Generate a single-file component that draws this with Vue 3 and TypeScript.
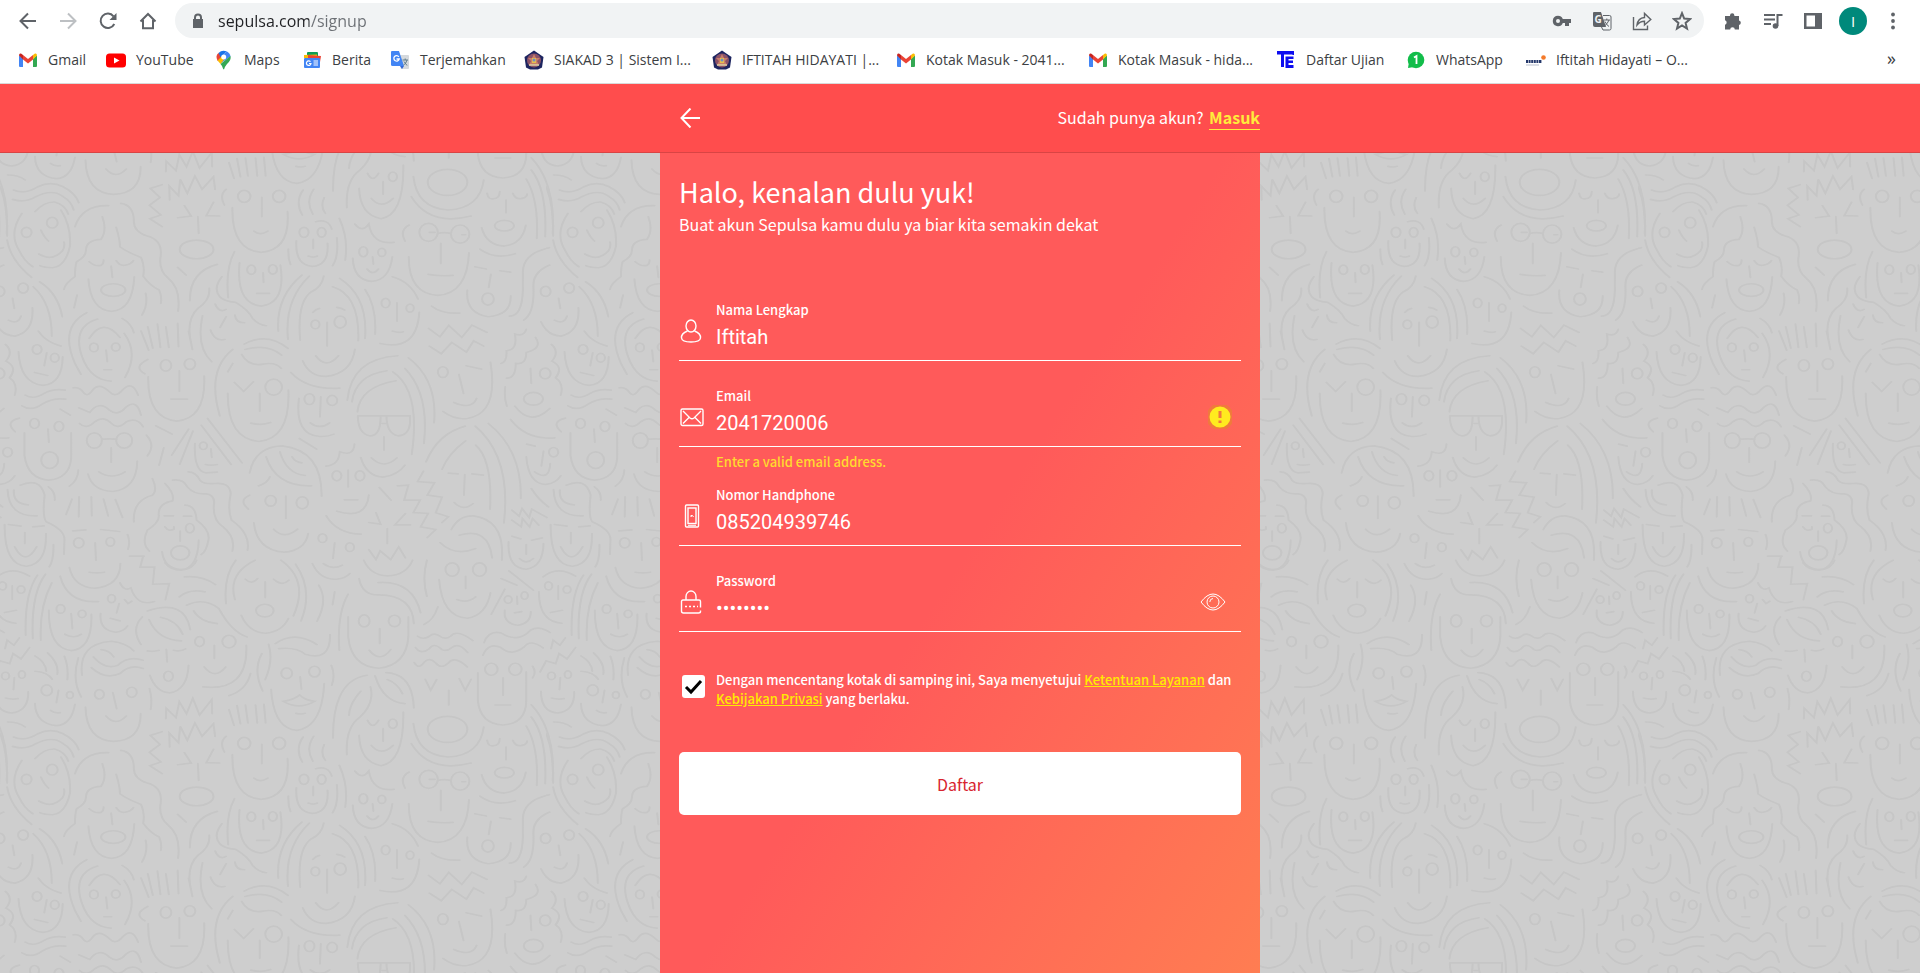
<script setup lang="ts">
import { ref } from 'vue'

interface Bookmark { icon: string; label: string; size: string }
interface Field { id: string; label: string; type: string; icon: string; error?: string }

const address = ref('sepulsa.com/signup')
const agreed = ref(true)
const showPassword = ref(false)
const values = ref<Record<string, string>>({
  name: 'Iftitah',
  email: '2041720006',
  phone: '085204939746',
  password: 'rahasia1',
})

const bookmarks: Bookmark[] = [
  { icon: 'gmail', label: 'Gmail', size: 'b88' },
  { icon: 'youtube', label: 'YouTube', size: 'b108' },
  { icon: 'maps', label: 'Maps', size: 'b88' },
  { icon: 'news', label: 'Berita', size: 'b88' },
  { icon: 'translate', label: 'Terjemahkan', size: 'b134' },
  { icon: 'crest', label: 'SIAKAD 3 | Sistem I...', size: 'b188' },
  { icon: 'crest', label: 'IFTITAH HIDAYATI |...', size: 'b184' },
  { icon: 'gmail', label: 'Kotak Masuk - 2041...', size: 'b192' },
  { icon: 'gmail', label: 'Kotak Masuk - hida...', size: 'b188' },
  { icon: 'te', label: 'Daftar Ujian', size: 'b130' },
  { icon: 'whatsapp', label: 'WhatsApp', size: 'b120' },
  { icon: 'alterra', label: 'Iftitah Hidayati – O...', size: 'b188' },
]

const fields: Field[] = [
  { id: 'name', label: 'Nama Lengkap', type: 'text', icon: 'person' },
  { id: 'email', label: 'Email', type: 'text', icon: 'mail', error: 'Enter a valid email address.' },
  { id: 'phone', label: 'Nomor Handphone', type: 'tel', icon: 'phone' },
  { id: 'password', label: 'Password', type: 'password', icon: 'lock' },
]

function inputType(f: Field): string {
  return f.type === 'password' && showPassword.value ? 'text' : f.type
}

// Doodle tile, upper part: faces and hair strokes.
const upper = [
  'M97 240Q105 262 115 273M92 312Q125 335 148 303Q155 290 152 276M52 190Q20 250 45 300Q58 335 78 350M145 180Q170 230 166 290Q155 350 125 353Q105 352 95 347M32 120Q60 135 90 110Q120 92 150 110Q180 130 187 158M30 148Q60 160 85 140Q125 115 150 140Q170 155 175 180M83 185Q105 155 130 156Q155 165 162 192M17 270Q25 330 75 382M0 110Q18 160 17 258',
  'M178 230Q195 165 258 167M287 160Q318 165 318 215Q318 245 350 258Q385 270 382 315Q375 360 400 385Q430 415 423 483M243 200Q255 240 240 268Q205 270 204 300Q205 320 182 335Q178 350 178 380Q155 400 152 418M276 232Q285 270 285 290Q300 305 335 322Q345 350 340 378Q355 405 378 420Q385 440 382 460M212 335Q225 350 240 346Q247 340 246 330M276 332Q285 350 300 345Q312 342 317 332M264 348L267 382M210 387Q215 480 265 484Q315 480 319 380M183 435L176 473M346 430Q352 465 337 495',
  'M385 104L357 115L380 142L355 166L382 195L356 206L385 230M422 203L454 198L438 167M507 157L490 197L522 198M470 200L472 250M403 150L402 108L424 137L428 88L445 130L463 78L480 118L507 80L511 118M422 352L442 375',
  'M537 118Q520 135 533 165M622 142L622 200M603 243Q618 258 636 243M552 173Q550 300 620 307Q690 300 683 185',
  'M744 268V295M732 318Q745 324 754 318M704 272Q700 345 742 349Q782 345 778 280M750 215Q780 205 788 237M800 263Q805 320 790 347M806 205Q828 265 820 330M685 297Q684 325 690 343M720 120Q700 155 718 195M745 118Q725 155 743 192M770 143Q760 170 773 190',
  'M625 368L626 397M610 430H640M569 338Q560 460 620 468Q680 460 666 345M557 305Q535 355 542 443',
  'M516 343Q450 365 451 452M527 380Q505 415 522 440Q530 453 560 457Q590 480 600 505Q615 525 633 527M497 415Q500 450 470 475Q440 510 455 585M481 497Q465 590 503 635M511 462Q520 490 537 478M537 500L523 532M558 495Q560 518 581 518M500 540Q510 575 534 568',
  'M873 70Q885 100 899 70M910 95V133M882 145Q905 180 934 145M853 115Q855 195 905 206Q960 195 958 45',
  'M1157 130Q1160 150 1172 146Q1187 145 1187 125M1218 130Q1225 150 1240 145Q1252 142 1252 132M1202 150V188M1144 233Q1155 285 1198 288Q1240 282 1249 226M1140 297Q1175 330 1224 311M1250 87Q1280 150 1275 265M1262 60Q1300 120 1295 260',
  'M1040 250Q1055 245 1070 250M1020 247H1033M1097 254H1106M1047 280V340M1017 373Q1045 379 1076 376M971 320Q970 430 1040 436Q1110 430 1114 308M972 225Q948 240 962 273',
  'M885 320L887 342M872 357Q885 378 899 357M838 325Q840 390 883 394Q925 390 932 320M843 222Q860 250 876 222Q885 285 936 277',
  'M1128 350L1155 357M1187 362L1213 366M1166 373L1161 412M1110 420Q1105 490 1160 500Q1215 495 1213 437M1305 293Q1240 310 1242 370V420Q1240 500 1210 498M1306 345Q1265 365 1267 410Q1270 490 1244 510M1025 468Q1050 492 1092 489',
  'M943 458V513M932 543Q947 550 958 545M903 580Q990 605 996 487M932 380Q975 395 993 447',
  'M777 517V588M743 487Q750 477 759 475M800 472Q812 474 819 480M750 617Q775 660 804 617M719 632Q735 680 775 679Q835 670 843 598M717 375Q655 440 661 543M735 378Q675 450 684 567M769 378Q765 410 740 425Q705 455 713 570M807 385Q875 440 867 565M790 410Q855 435 851 572M867 418Q895 470 891 552M691 667Q730 720 807 714',
  'M1018 535L1045 560L1066 526L1097 562L1121 525L1157 547M1020 588L1048 611L1073 577L1108 606L1125 572L1149 588',
  'M1327 445L1331 475M1317 510Q1340 525 1347 498M1285 515Q1300 557 1333 558Q1378 545 1374 473M1376 410Q1420 460 1420 558M1391 395Q1435 430 1445 500M1388 543Q1405 575 1442 588',
  'M1408 608L1402 647M1379 667L1410 676M1341 605Q1345 700 1400 706Q1445 700 1446 620',
  'M1250 538Q1245 560 1223 552Q1230 600 1203 602Q1205 635 1190 640M1272 562Q1290 595 1250 607Q1250 645 1225 640Q1225 685 1203 684M1310 583Q1330 605 1311 633Q1340 650 1320 683Q1340 700 1332 735M1260 655L1262 700M1223 768Q1260 830 1306 775M1213 808Q1250 870 1318 863M1200 710Q1197 745 1204 768',
  'M252 600L255 635M247 659H265M212 565Q245 500 285 562M295 550Q330 610 297 682M232 507Q170 530 195 620Q215 690 264 693M206 488Q140 530 178 640L192 672M290 505Q312 520 318 548',
  'M335 543L353 600M351 530L363 594M374 522L381 592M394 530L401 592M422 520L424 590M448 543L457 598M426 662V723M406 747H445M352 680Q350 805 420 813Q490 805 485 678M351 628Q315 650 344 671',
  'M557 697L579 724L602 695M617 730V783M596 819Q620 827 643 817M541 730Q540 865 615 874Q690 865 685 720M553 598Q490 660 522 797M541 665L553 640M574 613Q590 650 625 642Q655 635 668 655M582 598Q635 580 669 615M580 582Q635 545 684 595',
  'M762 740L760 800M737 818Q760 840 783 818M710 745Q700 855 760 859Q780 860 793 852',
  'M850 797H974V820Q970 857 945 857Q918 850 918 797M904 797Q905 857 878 857Q850 850 850 797M908 820H918M912 860V900M882 923Q912 960 943 923M857 922Q870 978 910 981Q945 975 962 945M849 785Q855 710 941 692M836 755Q845 675 919 662M825 750Q835 625 945 617M933 665Q1000 720 978 913M962 655Q1020 730 1007 880M970 623Q1040 690 1031 818',
  'M1107 647L1144 657M1090 673L1101 730M1078 757Q1120 780 1132 745M1052 784Q1080 810 1110 805Q1185 790 1165 637',
  'M60 735Q80 750 105 730Q125 715 155 720M52 767Q75 785 100 762Q125 742 156 747M143 777L167 795M174 713Q190 710 200 730Q210 740 220 720Q235 695 260 725Q275 745 292 718Q315 690 328 735M187 773Q200 780 213 787Q235 750 260 780Q280 800 300 770Q325 745 335 795M189 820Q205 840 225 815Q245 795 265 820Q280 840 300 815Q325 800 340 830M370 827L409 852',
  'M114 837L116 876M58 848V915Q65 985 115 990Q165 985 169 925V848M46 804Q10 815 36 845',
  'M242 867Q260 865 277 867M264 893V937M235 965Q265 990 297 965M209 972Q220 1022 268 1024Q325 1015 326 933M348 855Q370 885 350 917M186 960Q185 990 165 1008',
  'M501 896L503 922M488 943Q500 947 516 943M463 880Q460 965 490 968L516 966M448 837L408 915M458 843L427 942M389 893L378 945M478 825L549 943M493 805L575 938',
  'M410 990Q435 985 445 1010Q460 1033 490 1031Q512 1035 508 1065Q505 1110 530 1130Q560 1160 552 1203M447 965Q465 965 475 990Q485 1003 510 1000Q545 995 548 1030Q540 1080 550 1110Q595 1150 588 1200M392 1000Q415 1030 410 1052Q375 1060 377 1095Q380 1115 350 1140Q335 1180 355 1203M362 985Q375 1020 362 1035Q315 1050 318 1115M439 1065Q465 1065 467 1110Q500 1140 495 1170Q490 1205 478 1213M390 1097H412M436 1098H455M392 1130Q400 1145 413 1137V1130M428 1143V1173M385 1205Q390 1255 430 1258Q470 1255 472 1170',
  'M679 1038V1105M650 1137Q675 1170 707 1137M603 1118Q610 1200 675 1206Q725 1200 732 1150M593 1035Q565 1050 590 1077M593 968Q605 890 670 887Q765 900 764 1038M632 920Q655 1010 740 1007M665 905Q680 970 725 976M694 920Q700 935 717 938M641 980Q635 1000 614 1007M711 865L752 897',
  'M842 882Q840 920 807 905Q805 945 774 948M827 960V1010M818 1049H850M800 1083Q870 1110 876 1035M775 1097Q800 1150 858 1152M901 1012L929 1050M893 1088L904 1122L876 1117M963 1090L938 1124H975M920 1135V1180M876 1198L893 1228L903 1202L928 1228L947 1190L963 1223',
  'M1006 963L992 994L1032 998L1015 1035L1050 1041L1035 1088L1065 1100L1050 1117M944 1007L970 1005L960 1050H998L982 1087L1017 1090L999 1130L1035 1138L1015 1162',
  'M1105 828Q1040 850 1012 935M1106 872Q1065 910 1050 957M1130 885Q1170 930 1164 1077M1129 828Q1215 920 1197 1118M1160 820Q1240 900 1237 1045M1065 969L1088 971M1121 971L1148 975M1104 973L1102 1035M1079 1057Q1100 1085 1124 1060',
  'M1072 1138Q1090 1095 1125 1097Q1200 1110 1192 1230M1091 1155Q1160 1130 1169 1223M1045 1177Q1080 1220 1130 1195',
  'M1251 882L1271 888M1291 903L1286 947M1270 965Q1305 995 1307 940M1250 920Q1255 1000 1295 1003Q1320 1000 1332 977',
  'M1216 1080L1233 1098L1240 1075L1257 1102L1263 1077L1299 1102M1216 1110L1238 1130L1241 1105L1258 1130L1265 1105L1280 1125M1216 1158L1237 1166M1263 1170L1288 1163M1250 1183V1212M1234 1225Q1250 1245 1267 1225M1208 1175Q1205 1255 1250 1257Q1290 1250 1291 1180M1262 1015Q1280 1050 1303 1070',
  'M20 1123L50 1128M78 1130L105 1127M59 1147V1180M35 1190Q60 1250 87 1190M11 1123Q10 1245 63 1248Q112 1240 109 1150M48 1005Q95 980 106 1035Q100 1100 110 1115Q155 1140 153 1170L152 1212M33 1020Q30 1060 67 1064M18 1018Q20 1100 88 1097M115 1010Q132 1025 130 1050M127 1183Q128 1230 117 1250',
  'M171 1047L157 1093M188 1040L187 1100M217 1040L218 1097M246 1047L257 1097M274 1048L291 1102M173 1142L204 1139M239 1138L284 1144M226 1178L228 1230M303 1153Q310 1175 304 1197M795 1178L791 1225M768 1240Q790 1260 813 1245',
].join('')

const upperRings: number[][] = [
  [63, 247, 12, 15], [124, 218, 13, 16], [269, 420, 29, 19], [467, 298, 40, 28], [580, 139, 15, 18], [663, 139, 15, 18],
  [722, 247, 11, 15], [764, 247, 10, 14], [597, 359, 10, 14], [648, 358, 10, 14], [933, 80, 10, 14], [1198, 227, 23, 16],
  [1018, 247, 22, 27], [1093, 252, 22, 27], [863, 305, 10, 15], [907, 307, 9, 12], [1159, 447, 14, 18], [916, 459, 10, 14],
  [974, 474, 9, 12], [749, 523, 10, 13], [808, 516, 14, 18], [1296, 424, 12, 15], [1352, 414, 12, 15], [1385, 598, 11, 14],
  [1427, 623, 10, 13], [1295, 670, 13, 16], [1267, 746, 23, 19], [223, 592, 10, 13], [275, 591, 10, 12], [394, 646, 13, 17],
  [451, 642, 13, 16], [650, 711, 20, 24], [735, 747, 12, 16], [789, 751, 12, 15], [1052, 666, 12, 16], [82, 820, 11, 15],
  [140, 829, 11, 15], [118, 930, 20, 25], [224, 871, 18, 23], [295, 871, 19, 23], [483, 887, 9, 11], [451, 1134, 10, 14],
  [428, 1208, 22, 21], [643, 1052, 13, 16], [718, 1058, 14, 18], [800, 977, 11, 15], [855, 977, 11, 15], [1315, 906, 11, 14],
  [187, 1178, 12, 15], [262, 1175, 10, 13], [766, 1164, 10, 13], [831, 1191, 10, 13],
]

// Doodle tile, lower part: continues over the tile's bottom edge.
const lower = [
  'M394 475L395 444L418 472L426 424L443 460L458 414L474 464L503 418L504 460M544 448L556 495M563 436L571 490M583 434L589 488M607 434L611 488M627 432L631 488',
  'M880 380Q890 430 855 470Q820 500 824 583M872 345Q790 360 791 533M857 393Q830 430 829 465M891 347Q910 425 962 430M917 337Q980 340 983 443M920 358Q945 370 956 400',
  'M982 490Q990 585 1065 590Q1140 585 1149 500M977 550Q1020 640 1119 608M1010 357L1023 390L1037 358M1091 355L1105 390L1119 357M1066 390V434',
  'M992 228Q1005 240 1020 228Q1030 215 1045 228Q1058 240 1070 228Q1085 205 1123 241M987 262Q1000 285 1020 265Q1030 245 1050 268Q1060 275 1073 262Q1090 245 1111 277M984 307Q995 330 1008 305Q1020 290 1035 308Q1048 328 1065 308Q1080 285 1110 320',
  'M1150 247Q1160 210 1190 218Q1230 250 1260 210Q1280 195 1307 217M1147 285Q1160 245 1190 262Q1215 290 1245 260Q1260 235 1290 263M1195 353V405M1176 434H1213M1135 338V420Q1140 490 1195 494Q1250 490 1250 420V335M1265 318Q1275 335 1265 353M1262 433Q1320 510 1313 662',
  'M165 22Q175 80 225 84Q285 78 286 10M212 36Q230 40 248 36M143 48Q160 130 234 124M342 -12H308M340 -12L333 21H367L363 72L402 70L393 118M742 10Q760 60 800 57Q820 55 831 40',
  'M1326 77V117M1308 157L1336 150M1290 50Q1325 15 1367 48M1280 95Q1280 185 1335 189M1386 45Q1355 100 1358 225M1405 42Q1370 100 1375 235M1420 68Q1390 140 1394 240',
  'M169 160L172 205M154 222Q175 237 193 222M116 150Q115 265 170 271Q220 265 217 162M283 130L277 158M262 174L285 182M239 160Q235 210 275 216Q295 213 303 197M285 68Q295 95 311 83Q325 140 367 124M296 118L304 130L313 123',
  'M338 170Q310 205 335 253M350 152Q440 115 452 208M354 178Q375 240 431 242M381 171Q420 180 434 222M350 272Q365 275 378 270M412 270Q430 275 441 266M395 267L397 305M356 345Q370 395 403 398Q445 390 448 315',
  'M509 255V295M485 320Q510 360 536 320M482 380Q590 395 585 255M544 406Q585 390 595 340M443 135Q485 110 520 145Q550 215 587 230M460 152Q475 185 516 190M438 50Q480 45 512 73M426 110Q450 85 487 95M392 8Q405 30 430 30Q460 25 467 0',
  'M583 57Q598 75 612 55M650 57Q670 80 686 60M630 65V112M573 165Q590 215 630 219Q670 215 685 175M606 0Q540 40 558 118M560 0Q530 50 537 130M667 0Q735 60 697 167M702 12Q745 90 715 182M757 75Q780 120 753 183M795 95L790 133',
  'M713 350L716 387M673 423Q695 420 712 404Q725 420 747 423Q710 450 673 423ZM703 459Q715 463 725 459M644 387Q650 505 705 510Q765 500 770 370M787 315Q797 345 788 375M654 250Q700 210 753 253M662 265Q705 260 725 282Q785 305 784 223M638 252Q650 300 630 358M622 280Q600 330 624 392',
  'M902 205V250M877 270Q903 310 928 268M827 170V230Q835 320 900 324Q965 315 970 230V170M827 102Q800 160 806 270M853 55Q860 105 900 104Q980 105 983 190M898 67Q980 60 999 157M1040 140Q1030 180 1007 193M864 0Q880 45 920 47Q965 45 980 0',
  'M1106 48V85M1085 118Q1110 130 1130 110M1043 58Q1050 170 1110 174Q1155 165 1165 98M1014 0Q1002 55 1014 108M1199 87L1167 162M1190 55L1228 75M1209 32L1267 90M1228 108L1229 132M1222 158L1239 154M1199 150Q1195 190 1230 195Q1260 190 1261 155',
  'M1309 265L1314 240L1330 255L1343 233M1283 335L1297 302L1320 310L1328 280L1347 296L1367 262M1331 352L1329 388M1310 413Q1325 418 1340 415M1285 393Q1285 455 1325 458Q1365 452 1364 395M1380 287Q1405 305 1407 333M1410 278Q1438 310 1433 342M1450 288Q1460 320 1457 358M1380 333Q1410 335 1421 357',
  'M268 397L277 445M252 467Q275 500 300 467M203 440Q205 540 270 543Q335 540 334 460M193 410Q170 360 186 293M195 345Q185 250 265 243Q300 248 318 272M217 322Q250 360 285 340Q310 310 340 325M222 290Q250 330 280 315Q305 285 340 300M240 268Q260 270 270 290M355 385Q362 415 358 447',
  'M139 390L134 427M120 450Q130 460 143 457M83 430Q85 490 135 496Q170 492 178 432M18 485Q45 485 60 500',
].join('')

const lowerRings: number[][] = [
  [1063, 507, 47, 39], [1167, 327, 15, 18], [1224, 327, 15, 18], [1303, 77, 9, 12], [1347, 88, 9, 11], [144, 146, 10, 13],
  [195, 161, 9, 11], [265, 115, 9, 12], [400, 348, 11, 15], [474, 244, 11, 15], [544, 244, 16, 19], [629, 151, 21, 19],
  [681, 339, 13, 16], [747, 334, 13, 16], [865, 182, 13, 18], [937, 182, 14, 17], [1074, 28, 16, 20], [1139, 28, 16, 20],
  [1207, 118, 9, 11], [1246, 106, 8, 11], [1310, 347, 9, 11], [1349, 343, 8, 11], [236, 402, 11, 14], [313, 396, 12, 15],
  [111, 390, 13, 16], [166, 404, 8, 10],
]
</script>

<template>
  <div class="window">
    <div class="toolbar">
      <div class="nav">
        <button type="button" aria-label="Back">
          <svg viewBox="0 0 20 20"><path d="M18 10H3M10 2.500L2.500 10L10 17.500" class="ln" /></svg>
        </button>
        <button type="button" aria-label="Forward" class="off">
          <svg viewBox="0 0 20 20"><path d="M2 10H17M10 2.500L17.500 10L10 17.500" class="ln" /></svg>
        </button>
        <button type="button" aria-label="Reload">
          <svg viewBox="0 0 20 20"><path d="M16.300 13A7.200 7.200 0 1 1 15.500 5.300" class="ln" /><path d="M18.500 2V9H11.500Z" class="fl" /></svg>
        </button>
        <button type="button" aria-label="Home">
          <svg viewBox="0 0 20 20"><path d="M2.500 10.500L10 3L17.500 10.500M5 9V17.200H15V9" class="ln" /></svg>
        </button>
      </div>
      <div class="omnibox">
        <svg class="padlock" viewBox="0 0 12 16"><path d="M1 6h10v9H1z" class="fl" /><path d="M3 7V4.500a3 3 0 0 1 6 0V7" class="ln" /></svg>
        <input v-model="address" class="address" type="text" aria-label="Address" />
        <button type="button" aria-label="Passwords">
          <svg viewBox="0 0 20 20"><path fill-rule="evenodd" d="M6 4.800A5.200 5.200 0 1 0 10.800 12H13V15H17V12H19V8H10.800A5.200 5.200 0 0 0 6 4.800ZM6 8A2 2 0 1 1 6 12A2 2 0 0 1 6 8Z" class="fl" /></svg>
        </button>
        <button type="button" aria-label="Translate page">
          <svg viewBox="0 0 20 20"><path d="M2 1H9L14 16H3Q1 16 1 14V2Q1 1 2 1Z" class="fl" /><path d="M11 4.500H17.500Q19 4.500 19 6V17.500Q19 19 17.500 19H11L9.500 16" class="thin" /><path d="M11.500 9H18M14.800 7.500V9M17 9Q15.500 13 12.500 15M13 10.500Q14.500 14 17 15.500" class="thin" /><text x="2.500" y="12" class="gsmall">G</text></svg>
        </button>
        <button type="button" aria-label="Share">
          <svg viewBox="0 0 20 20"><path d="M1.500 6V18.500H15.500V14.500" class="share" /><path d="M5 14Q6 7 12.500 6.500V2.500L18.800 8.500L12.500 14V10.300Q8 10.300 5 14Z" class="share" /></svg>
        </button>
        <button type="button" aria-label="Bookmark this page">
          <svg viewBox="0 0 20 20"><path d="M10 2.200L12.200 7.600L18 8.100L13.600 11.900L15 17.600L10 14.500L5 17.600L6.400 11.900L2 8.100L7.800 7.600Z" class="star" /></svg>
        </button>
      </div>
      <div class="tools">
        <button type="button" aria-label="Extensions">
          <svg viewBox="0 0 20 20"><path d="M7 4.500A2.200 2.200 0 0 1 11.400 4.500V5H16V9.500A2.300 2.300 0 0 1 16 14V18.500H11.800A2.300 2.300 0 0 0 7.200 18.500H2V13.700A2.300 2.300 0 0 0 2 9.300V5H7Z" class="fl" /></svg>
        </button>
        <button type="button" aria-label="Media">
          <svg viewBox="0 0 20 20"><path d="M1 4H12M1 8.500H12M1 13H8M14.500 15V4H19.500" class="ln" /><circle cx="12.500" cy="15" r="2.800" class="fl" /></svg>
        </button>
        <button type="button" aria-label="Side panel">
          <svg viewBox="0 0 20 20"><path fill-rule="evenodd" d="M1 2H19V18H1ZM3.500 4.500V15.500H12V4.500Z" class="fl" /></svg>
        </button>
        <button type="button" class="avatar" aria-label="Profile">I</button>
        <button type="button" aria-label="Menu">
          <svg viewBox="0 0 20 20"><circle cx="10" cy="3.500" r="1.900" class="fl" /><circle cx="10" cy="10" r="1.900" class="fl" /><circle cx="10" cy="16.500" r="1.900" class="fl" /></svg>
        </button>
      </div>
    </div>

    <nav class="bookmarks" aria-label="Bookmarks">
      <a v-for="b in bookmarks" :key="b.label" href="#" :class="b.size">
        <svg viewBox="0 0 20 20">
          <template v-if="b.icon === 'gmail'">
            <path d="M1 5.500V16Q1 17 2 17H5V8.500Z" fill="#4285f4" /><path d="M19 5.500V16Q19 17 18 17H15V8.500Z" fill="#34a853" />
            <path d="M15 5L17 3.500Q19 3 19 5.500L15 9.500Z" fill="#fbbc04" /><path d="M1 5.500Q1 3 3 3.500L5 5V9.500Z" fill="#c5221f" /><path d="M5 5L10 9L15 5V9.500L10 13.500L5 9.500Z" fill="#ea4335" />
          </template>
          <template v-else-if="b.icon === 'youtube'">
            <rect x="0" y="3.500" width="20" height="14" rx="3.500" fill="#f00" /><path d="M8 7.500L13.500 10.500L8 13.500Z" fill="#fff" />
          </template>
          <template v-else-if="b.icon === 'maps'">
            <path d="M4.500 3L9 7L3.600 11Q1 5.500 4.500 3Z" fill="#ea4335" /><path d="M4.500 3Q8 -0.500 12.500 1.300L7 8Z" fill="#1a73e8" /><path d="M12.500 1.300Q16 3 16.500 6.500L7 13L4.500 11Z" fill="#4285f4" /><path d="M3.600 10.500L7.500 6.500L10.500 9L6.500 14Z" fill="#fbbc04" /><path d="M16.500 6Q17.500 10 13 14Q10.500 17 10 19.500Q9 19.500 8 16L6.500 14Z" fill="#34a853" /><circle cx="9.700" cy="7" r="2.500" fill="#fff" />
          </template>
          <template v-else-if="b.icon === 'news'">
            <rect x="5" y="2" width="11" height="8" rx="1" fill="#0f9d58" /><path d="M2 5L15 4.500V8H2Z" fill="#fbbc04" /><path d="M6 5L19 6L18 12H6Z" fill="#ea4335" /><rect x="2" y="8" width="16" height="10" rx="1" fill="#4285f4" />
            <path d="M8.500 11.700A2.300 2.300 0 1 0 9 13.500H7M11.500 11H16M11.500 13H16M11.500 15H16" stroke="#fff" stroke-width="1.200" fill="none" />
          </template>
          <template v-else-if="b.icon === 'translate'">
            <path d="M8 5H18Q19 5 19 6V18Q19 19 18 19H11Z" fill="#d5d9dd" /><path d="M2 1H9L14 16H2.500Q1 16 1 14.500V2Q1 1 2 1Z" fill="#4285f4" /><path d="M10 16H14L12 19Z" fill="#3367d6" /><path d="M8.800 6.800A2.700 2.700 0 1 0 9.200 9H6.500" stroke="#fff" stroke-width="1.300" fill="none" /><path d="M12.500 10H18M15.200 8.500V10M17 10Q16 14 13.500 15M14 11.500L17 15.500" stroke="#607d8b" fill="none" />
          </template>
          <template v-else-if="b.icon === 'crest'">
            <path d="M10 0.500L19.500 7L18 17.500L14 19.500H6L2 17.500L0.500 7Z" fill="#1d2560" /><circle cx="10" cy="10.500" r="7" fill="#8a5268" /><path d="M10 4L12 8L16 8L13 11L15 15H5L7 11L4 8L8 8Z" fill="#c97f68" /><path d="M8 8H12V13H8Z" fill="#e8bd4c" /><path d="M5 15H15" stroke="#ddd2a6" stroke-width="1.500" /><circle cx="10" cy="10" r="1.500" fill="#6b8ec4" />
          </template>
          <template v-else-if="b.icon === 'te'">
            <path d="M1 1H18V5H16.500V4.500H8V17H5V4.500H1ZM9.500 6.500H17.500V9H12.500V10.500H17V13H12.500V15H17.500V18H9.500Z" fill="#0d0df0" />
          </template>
          <template v-else-if="b.icon === 'whatsapp'">
            <circle cx="10" cy="10" r="8.300" fill="#12bd4a" /><path d="M2 18L3 12L8 17Z" fill="#12bd4a" /><path d="M8 7.500L10.500 6V14" stroke="#fff" stroke-width="1.800" fill="none" />
          </template>
          <template v-else>
            <path d="M0 11.500H16" stroke="#24386b" stroke-width="3" stroke-dasharray="2 .6" /><path d="M0 15H13" stroke="#b9bfce" /><circle cx="17.500" cy="7.500" r="2.300" fill="#f47a2a" />
          </template>
        </svg>
        <span>{{ b.label }}</span>
      </a>
      <button type="button" class="more" aria-label="More bookmarks">»</button>
    </nav>

    <header class="masthead">
      <div class="inner">
        <button type="button" class="back" aria-label="Kembali">
          <svg viewBox="0 0 20 20"><path d="M20 10H1.500M10.500 0.500L1.500 10L10.500 19.500" /></svg>
        </button>
        <p>Sudah punya akun? <a href="#">Masuk</a></p>
      </div>
    </header>

    <main class="page">
      <svg class="doodles" aria-hidden="true">
        <defs>
          <g id="faces">
            <path :d="upper" />
            <ellipse v-for="(r, i) in upperRings" :key="i" :cx="r[0]" :cy="r[1]" :rx="r[2]" :ry="r[3]" />
            <g transform="translate(0 1230)">
              <path :d="lower" />
              <ellipse v-for="(r, i) in lowerRings" :key="i" :cx="r[0]" :cy="r[1]" :rx="r[2]" :ry="r[3]" />
            </g>
          </g>
          <pattern id="tile" width="546" height="547" patternUnits="userSpaceOnUse" patternTransform="translate(0 -3)">
            <g transform="scale(.421 .3335)">
              <use href="#faces" /><use href="#faces" x="-1297" /><use href="#faces" y="-1640" /><use href="#faces" x="-1297" y="-1640" />
            </g>
          </pattern>
        </defs>
        <rect class="wall" width="100%" height="100%" fill="url(#tile)" />
      </svg>

      <form class="card" @submit.prevent>
        <h1>Halo, kenalan dulu yuk!</h1>
        <p class="lead">Buat akun Sepulsa kamu dulu ya biar kita semakin dekat</p>

        <div class="fields">
          <div v-for="f in fields" :key="f.id" class="field">
            <div class="line">
              <svg class="glyph" viewBox="0 0 24 24">
                <template v-if="f.icon === 'person'">
                  <ellipse cx="11" cy="7" rx="5" ry="6" /><path d="M7.500 12Q1 14.500 1.500 19Q2 23 11 23Q20 23 20.500 19Q21 14.500 14.500 12" />
                </template>
                <template v-else-if="f.icon === 'mail'">
                  <rect x="1" y="4" width="22" height="16.500" rx="1.500" /><path d="M3 6L10 13Q12 14.500 14 13L21 6M3 18.500L9 12.500M21 18.500L15 12.500" />
                </template>
                <template v-else-if="f.icon === 'phone'">
                  <rect x="5.500" y="1" width="13" height="22" rx="1" /><rect x="8" y="4" width="8" height="15.500" /><path d="M10.500 12.500L11.500 11V12.500L12.500 11.500L13.500 13" stroke-width="1" /><path d="M8 21.300H16" stroke-width="1" />
                </template>
                <template v-else>
                  <path d="M6 10V6.500A5 5.500 0 0 1 16 6.500V10M20.500 17.500V11.500Q20.500 10 19 10H3Q1.500 10 1.500 11.500V21Q1.500 23 3.500 23H18.500Q20.500 23 20.500 21.500V20.500" /><path d="M5 16.500H18" class="dots" />
                </template>
              </svg>
              <div class="entry">
                <label :for="f.id">{{ f.label }}</label>
                <input :id="f.id" v-model="values[f.id]" :type="inputType(f)" :aria-invalid="!!f.error" />
              </div>
              <svg v-if="f.error" class="warn" viewBox="0 0 24 24"><circle cx="12" cy="12" r="12" /><path d="M12 6V13M12 15.500V18" /></svg>
              <button v-if="f.type === 'password'" type="button" class="eye" aria-label="Tampilkan password" @click="showPassword = !showPassword">
                <svg viewBox="0 0 26 18"><path d="M1 9Q7 1 13 1Q19 1 25 9Q19 17 13 17Q7 17 1 9Z" /><circle cx="13" cy="9" r="6" /><path d="M9.800 9A3.500 3.500 0 0 1 13 5.500" /></svg>
              </button>
            </div>
            <p v-if="f.error" class="error">{{ f.error }}</p>
          </div>
        </div>

        <div class="consent">
          <input id="agree" v-model="agreed" type="checkbox" />
          <label for="agree">Dengan mencentang kotak di samping ini, Saya menyetujui <a href="#">Ketentuan Layanan</a> dan <a href="#">Kebijakan Privasi</a> yang berlaku.</label>
        </div>

        <button type="submit" class="submit">Daftar</button>
      </form>
    </main>
  </div>
</template>

<style>
body {
  margin: 0;
}
</style>

<style scoped>
.window {
  display: flex;
  flex-direction: column;
  min-height: 100vh;
  background: #fff;
  font-family: "Open Sans", "Noto Sans", sans-serif;
}
button {
  padding: 0;
  border: 0;
  background: none;
  color: inherit;
  font: inherit;
  cursor: pointer;
}
.toolbar {
  display: flex;
  align-items: center;
  height: 41px;
  color: #5f6368;
}
.toolbar svg {
  display: block;
  width: 20px;
  height: 20px;
}
.nav {
  display: flex;
  gap: 20px;
  padding: 0 17px 0 18px;
}
.off {
  color: #bdc0c3;
}
.ln {
  fill: none;
  stroke: currentColor;
  stroke-width: 2;
}
.thin {
  fill: none;
  stroke: currentColor;
  stroke-width: 1;
}
.share {
  fill: none;
  stroke: currentColor;
  stroke-width: 1.4;
}
.star {
  fill: none;
  stroke: currentColor;
  stroke-width: 2;
}
.fl {
  fill: currentColor;
}
.gsmall {
  font-size: 10px;
  font-weight: 700;
  fill: #f1f3f4;
}
.omnibox {
  display: flex;
  flex: 1;
  align-items: center;
  gap: 20px;
  height: 35px;
  padding: 0 12px 0 17px;
  border-radius: 18px;
  background: #f1f3f4;
}
.toolbar .padlock {
  width: 12px;
  height: 16px;
  margin-right: -6px;
}
.address {
  flex: 1;
  min-width: 0;
  padding: 0;
  border: 0;
  outline: 0;
  background: linear-gradient(90deg, #202124 91px, #6b6f74 91px);
  background-clip: text;
  color: transparent;
  font: 16px/24px "Open Sans", "Noto Sans", sans-serif;
}
.tools {
  display: flex;
  align-items: center;
  gap: 20px;
  padding: 0 17px 0 19px;
}
.avatar {
  width: 28px;
  height: 28px;
  margin: 0 -4px;
  border-radius: 50%;
  background: #00897b;
  color: #fff;
  font-size: 15px;
  line-height: 28px;
}
.bookmarks {
  display: flex;
  align-items: center;
  box-sizing: border-box;
  height: 43px;
  padding: 0 24px 4px 18px;
  border-bottom: 1px solid #d9d9d9;
}
.bookmarks a {
  display: flex;
  flex: none;
  align-items: center;
  gap: 10px;
  color: #3c4043;
  font-size: 14px;
  line-height: 20px;
  text-decoration: none;
  white-space: nowrap;
}
.bookmarks svg {
  width: 20px;
  height: 20px;
}
.b88 { width: 88px; }
.b108 { width: 108px; }
.b120 { width: 120px; }
.b130 { width: 130px; }
.b134 { width: 134px; }
.b184 { width: 184px; }
.b188 { width: 188px; }
.b192 { width: 192px; }
.more {
  margin-left: auto;
  padding-bottom: 4px;
  color: #3c4043;
  font-size: 18px;
  line-height: 20px;
}
.masthead {
  border-bottom: 1px solid #d94444;
  background: #ff4d4d;
  color: #fff;
  font-family: "Noto Sans CJK SC", sans-serif;
}
.inner {
  display: flex;
  align-items: center;
  justify-content: space-between;
  box-sizing: border-box;
  max-width: 600px;
  height: 68px;
  margin: 0 auto;
  padding-left: 20px;
}
.back svg {
  display: block;
  width: 20px;
  height: 20px;
  fill: none;
  stroke: #fff;
  stroke-width: 2;
}
.inner p {
  margin: 0;
  padding-bottom: 2px;
  font-size: 16px;
  line-height: 24px;
}
.inner a {
  margin-left: 2px;
  border-bottom: 1px solid #ffeb3b;
  color: #ffeb3b;
  font-weight: 700;
  text-decoration: none;
}
.page {
  position: relative;
  display: flex;
  flex: 1;
  justify-content: center;
  background: #cecece;
}
.doodles {
  position: absolute;
  inset: 0;
  width: 100%;
  height: 100%;
  fill: none;
  stroke: #c6c6c6;
  stroke-width: 5;
  stroke-linecap: round;
}
.wall {
  stroke: none;
}
.card {
  position: relative;
  box-sizing: border-box;
  width: 100%;
  max-width: 600px;
  padding: 18px 19px;
  background: linear-gradient(123deg, #ff5a5a 50%, #ff7d52);
  color: #fff;
  font-family: "Noto Sans CJK SC", sans-serif;
}
h1 {
  margin: 0;
  font-size: 27px;
  font-weight: 400;
  line-height: 41px;
}
.lead {
  margin: 0 0 65px;
  font-size: 16px;
  line-height: 24px;
}
.field {
  margin-bottom: 26px;
}
.field:has(.error) {
  margin-bottom: 0;
}
.line {
  display: flex;
  align-items: center;
  height: 59px;
  border-bottom: 1px solid #fff;
}
.glyph {
  width: 24px;
  height: 24px;
  margin: 0 12px 0 1px;
  fill: none;
  stroke: #fff;
  stroke-width: 1.4;
}
.dots {
  stroke-dasharray: 2 2;
}
.entry {
  display: flex;
  flex: 1;
  flex-direction: column;
  align-self: flex-start;
}
.entry label {
  font-size: 13px;
  font-weight: 500;
  line-height: 18px;
}
.entry input {
  width: 100%;
  height: 30px;
  margin-top: 3px;
  padding: 0;
  border: 0;
  outline: 0;
  background: none;
  color: #fff;
  font: 20px Roboto, sans-serif;
}
.warn {
  width: 24px;
  height: 24px;
  margin-right: 9px;
  fill: #ffeb1f;
  stroke: #f07a3c;
  stroke-width: 3;
}
.eye {
  margin-right: 15px;
}
.eye svg {
  display: block;
  width: 26px;
  height: 18px;
  fill: none;
  stroke: #fff;
}
.error {
  margin: 0;
  padding: 5px 0 14px 37px;
  color: #ffdb2e;
  font-size: 13px;
  font-weight: 500;
  line-height: 20px;
}
.consent {
  display: flex;
  align-items: flex-start;
  gap: 11px;
  margin-top: 38px;
  padding-left: 3px;
}
.consent input {
  flex: none;
  width: 23px;
  height: 23px;
  margin: 5px 0 0;
  border-radius: 3px;
  appearance: none;
  background: #fff;
}
.consent input:checked {
  background: #fff url("data:image/svg+xml,%3Csvg xmlns='http://www.w3.org/2000/svg' viewBox='0 0 23 23'%3E%3Cpath d='M4 12L9 17L19 6' fill='none' stroke='%23000' stroke-width='3'/%3E%3C/svg%3E");
}
.consent label {
  font-size: 13px;
  font-weight: 500;
  line-height: 19px;
}
.consent a {
  color: #ffeb00;
}
.submit {
  display: block;
  width: 100%;
  height: 63px;
  margin-top: 44px;
  border-radius: 5px;
  background: #fff;
  color: #d8232f;
  font-size: 16px;
}
</style>
